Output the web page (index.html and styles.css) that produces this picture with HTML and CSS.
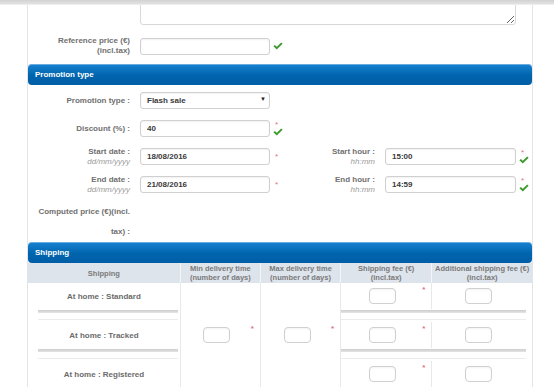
FILE: index.html
```html
<!DOCTYPE html>
<html lang="en">
<head>
    <meta charset="UTF-8">
    <meta name="viewport" content="width=device-width, initial-scale=1.0">
    <title>Promotion</title>
    <link rel="stylesheet" href="styles.css">
</head>
<body>
<div class="topbar"></div>
<div class="panel">
    <!-- description, scrolled off the top -->
    <div class="top">
        <textarea class="desc"></textarea>
    </div>

    <div class="ref">
        <label class="lbl">Reference price (€)<br>(incl.tax)</label>
        <input class="in" type="text">
        <span class="mark"><svg class="ok" viewBox="0 0 10 8"><path d="M0.4 4.3 L1.9 2.9 L3.8 4.7 L8.2 0.4 L9.6 1.8 L3.8 7.4 Z"/></svg></span>
    </div>

    <h2 class="bar">Promotion type</h2>
    <div class="promo">
        <label class="lbl">Promotion type :</label>
        <span class="sel">
            <select class="in">
                <option>Flash sale</option>
            </select>
        </span>
        <span class="mark"></span>
        <span></span><span></span><span></span>

        <label class="lbl">Discount (%) :</label>
        <input class="in" type="text" value="40">
        <span class="mark"><span class="req">*</span><svg class="ok" viewBox="0 0 10 8"><path d="M0.4 4.3 L1.9 2.9 L3.8 4.7 L8.2 0.4 L9.6 1.8 L3.8 7.4 Z"/></svg></span>
        <span></span><span></span><span></span>

        <label class="lbl">Start date :<em>dd/mm/yyyy</em></label>
        <input class="in" type="text" value="18/08/2016">
        <span class="mark"><span class="req">*</span></span>
        <label class="lbl">Start hour :<em>hh:mm</em></label>
        <input class="in" type="text" value="15:00">
        <span class="mark"><span class="req">*</span><svg class="ok" viewBox="0 0 10 8"><path d="M0.4 4.3 L1.9 2.9 L3.8 4.7 L8.2 0.4 L9.6 1.8 L3.8 7.4 Z"/></svg></span>

        <label class="lbl">End date :<em>dd/mm/yyyy</em></label>
        <input class="in" type="text" value="21/08/2016">
        <span class="mark"><span class="req">*</span></span>
        <label class="lbl">End hour :<em>hh:mm</em></label>
        <input class="in" type="text" value="14:59">
        <span class="mark"><span class="req">*</span><svg class="ok" viewBox="0 0 10 8"><path d="M0.4 4.3 L1.9 2.9 L3.8 4.7 L8.2 0.4 L9.6 1.8 L3.8 7.4 Z"/></svg></span>

        <label class="lbl computed">Computed price (€)(incl. tax) :</label>
    </div>

    <h2 class="bar">Shipping</h2>
    <table class="ship">
        <colgroup>
            <col style="width:152px"><col style="width:80px"><col style="width:80px"><col style="width:91px"><col style="width:100px">
        </colgroup>
        <tr>
            <th>Shipping</th>
            <th>Min delivery time<br>(number of days)</th>
            <th>Max delivery time<br>(number of days)</th>
            <th>Shipping fee (€)<br>(incl.tax)</th>
            <th>Additional shipping fee (€)<br>(incl.tax)</th>
        </tr>
        <tr class="item">
            <td class="name">At home : Standard</td>
            <td class="box-cell" rowspan="5"><input class="box" type="text"><span class="req">*</span></td>
            <td class="box-cell" rowspan="5"><input class="box" type="text"><span class="req">*</span></td>
            <td class="box-cell"><input class="box" type="text"><span class="req">*</span></td>
            <td class="box-cell"><input class="box" type="text"></td>
        </tr>
        <tr class="sep">
            <td class="sep-name"><div class="band"></div><div class="line"></div></td>
            <td class="sep-fee" colspan="2"><div class="band"></div><div class="line"></div></td>
        </tr>
        <tr class="item">
            <td class="name">At home : Tracked</td>
            <td class="box-cell"><input class="box" type="text"><span class="req">*</span></td>
            <td class="box-cell"><input class="box" type="text"></td>
        </tr>
        <tr class="sep">
            <td class="sep-name"><div class="band"></div><div class="line"></div></td>
            <td class="sep-fee" colspan="2"><div class="band"></div><div class="line"></div></td>
        </tr>
        <tr class="item">
            <td class="name">At home : Registered</td>
            <td class="box-cell"><input class="box" type="text"><span class="req">*</span></td>
            <td class="box-cell"><input class="box" type="text"></td>
        </tr>
    </table>
</div>
</body>
</html>
```

FILE: styles.css
```css
* {
    margin: 0;
    padding: 0;
    box-sizing: border-box;
    font-family: "Liberation Sans", Arial, sans-serif;
}
body {
    background: #fff;
    font-size: 8px;
    color: #666;
    overflow: hidden;
}
.topbar {
    height: 5px;
    background: linear-gradient(#d2d2d2, #e2e2e2);
    border-bottom: 1px solid #ededed;
}
.panel {
    margin-left: 27px;
    width: 506px;
    border-left: 1px solid #e4e4e4;
    border-right: 1px solid #e4e4e4;
}
.top {
    height: 20px;
    overflow: hidden;
    padding-left: 112px;
}
.desc {
    display: block;
    width: 376px;
    height: 44px;
    margin-top: -24px;
    border: 1px solid #d8d8d8;
    border-radius: 3px;
}
.ref {
    display: grid;
    grid-template-columns: 112px 130px 24px;
    align-items: center;
    height: 17px;
    margin: 11px 0;
}
.lbl {
    text-align: right;
    padding-right: 10px;
    font-weight: bold;
    color: #707070;
    line-height: 10px;
}
.lbl em {
    display: block;
    font-weight: normal;
    font-style: italic;
    color: #9a9a9a;
}
.in {
    display: block;
    width: 100%;
    height: 17px;
    border: 1px solid #d0d0d0;
    border-radius: 3px;
    padding: 0 6px;
    background: #fff;
    font: bold 8px "Liberation Sans", Arial, sans-serif;
    color: #3a3a3a;
    box-shadow: inset 0 1px 2px rgba(0,0,0,0.06);
    outline: none;
}
.sel {
    position: relative;
    display: block;
}
.sel select {
    appearance: none;
    -webkit-appearance: none;
}
.sel::after {
    content: "▼";
    position: absolute;
    right: 4px;
    top: 4px;
    font-size: 6px;
    color: #222;
    pointer-events: none;
}
.mark {
    display: flex;
    flex-direction: column;
    justify-content: center;
    align-items: flex-start;
    height: 17px;
    padding-left: 3px;
}
.req {
    color: #e07482;
    font-size: 8px;
    line-height: 6px;
    margin-left: 2px;
}
.ok {
    display: block;
    width: 10px;
    height: 8px;
    fill: #3f9b2f;
}
/* Section header */
.bar {
    height: 21px;
    line-height: 21px;
    padding-left: 7px;
    border-radius: 4px;
    background: linear-gradient(#1883d2, #0064ad 55%, #005ea6);
    box-shadow: inset 0 1px 0 rgba(255,255,255,0.35);
    color: #fff;
    font-size: 8px;
    font-weight: bold;
}
.promo {
    display: grid;
    grid-template-columns: 112px 130px 24px 91px 131px 1fr;
    grid-template-rows: repeat(4, 17px) 38px;
    row-gap: 11px;
    align-items: center;
    padding-top: 7px;
}
.promo .computed {
    grid-column: 1;
    line-height: 20px;
    align-self: start;
    margin-top: -2px;
}
/* Shipping table */
.ship {
    width: 100%;
    border-collapse: collapse;
    table-layout: fixed;
}
.ship th {
    height: 20px;
    padding: 0;
    background: #dee4eb;
    color: #7a7a7a;
    font-size: 7.5px;
    font-weight: bold;
    line-height: 9px;
    white-space: nowrap;
    border-left: 1px solid #f3f5f8;
}
.ship th:first-child {
    border-left: none;
}
.ship td {
    border-left: 1px solid #e8e8e8;
    text-align: center;
    font-weight: bold;
    color: #6b6b6b;
    position: relative;
}
.ship td.name, .ship td.sep-name {
    border-left: none;
}
.ship tr.item td {
    height: 26px;
}
.box-cell {
    padding-right: 7px;
}
.box {
    display: inline-block;
    vertical-align: middle;
    width: 27px;
    height: 16px;
    border: 1px solid #d0d0d0;
    border-radius: 4px;
    background: #fff;
    box-shadow: inset 0 1px 2px rgba(0,0,0,0.05);
}
.box-cell .req {
    position: absolute;
    right: 6px;
    top: 50%;
    margin-top: -9px;
}
.ship tr.sep td {
    height: 13px;
    vertical-align: top;
}
.band {
    height: 3px;
    margin-top: 1px;
    background: linear-gradient(#cdcdcd, #e4e4e4);
}
.line {
    height: 1px;
    margin-top: 6px;
    background: #ececec;
}
.sep-name .band, .sep-name .line {
    margin-left: 10px;
    margin-right: 2px;
}
.sep-fee .band, .sep-fee .line {
    margin-right: 6px;
}
```
